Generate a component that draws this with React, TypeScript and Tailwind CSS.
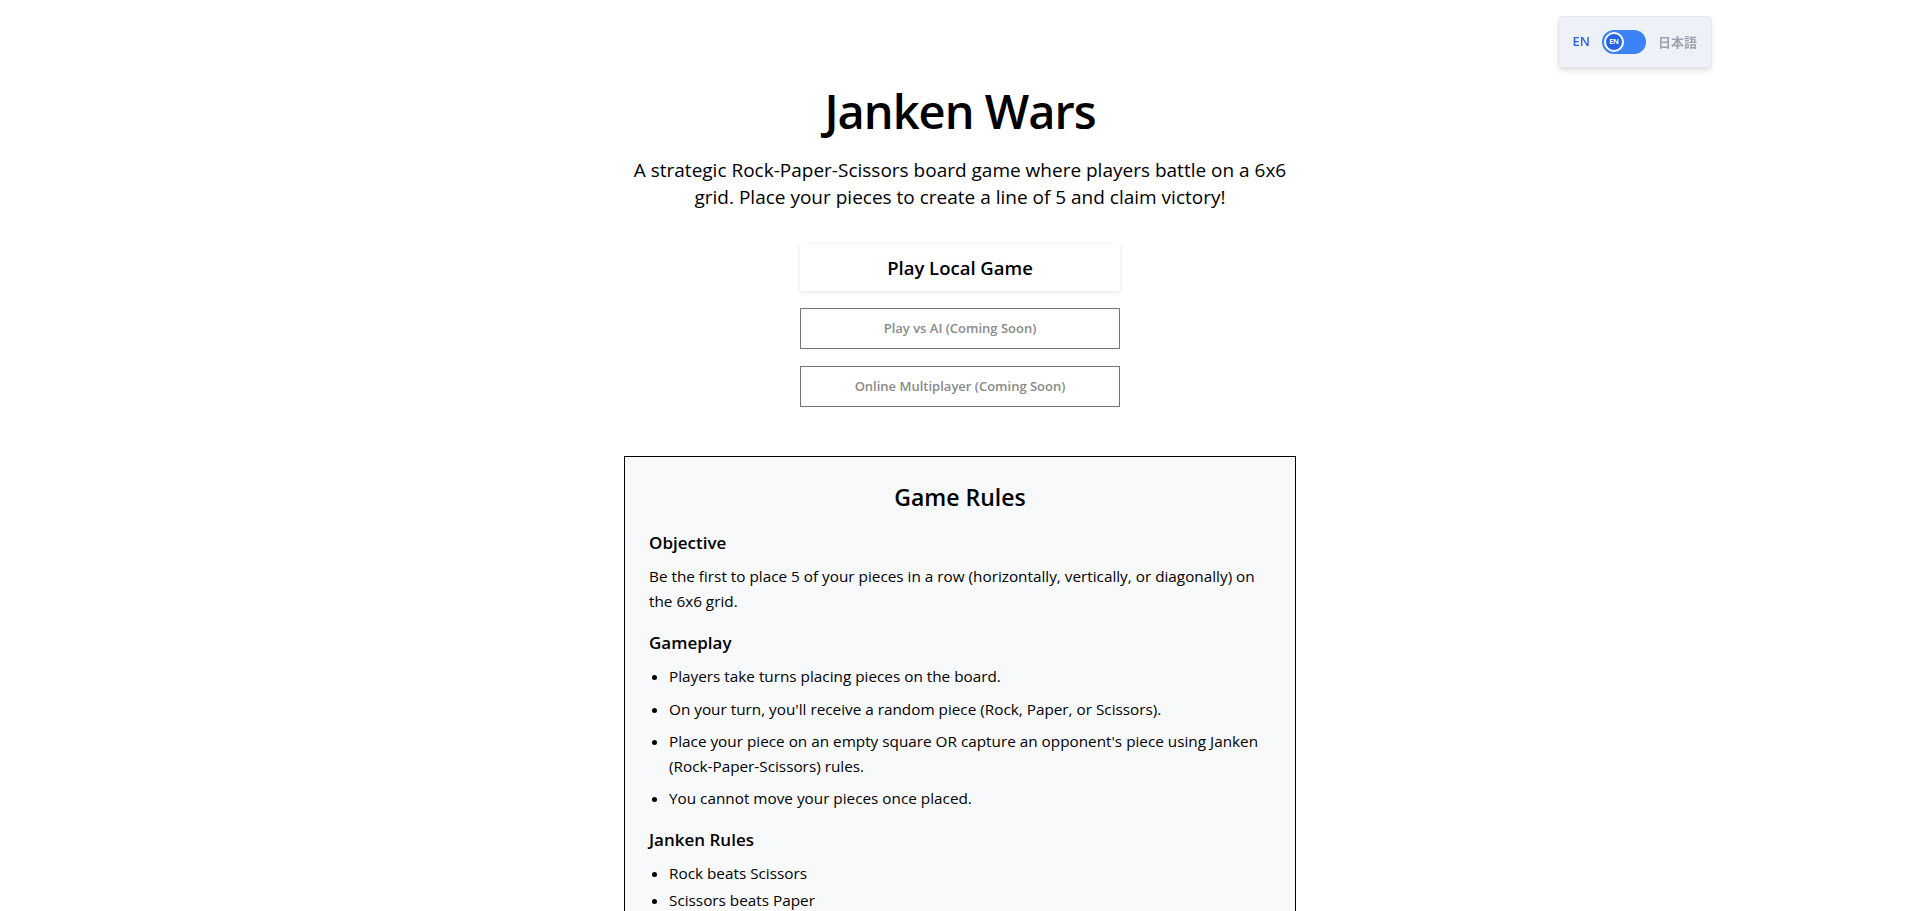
import React from "react";

function LangToggle() {
  return (
    <div className="fixed top-4 right-[208px] flex items-center gap-3 h-[52px] px-3.5 bg-[#eef2f8] border border-[#e3e8f0] rounded-sm shadow-md">
      <span className="text-[13px] font-semibold text-[#2563eb]">EN</span>
      <div className="relative w-11 h-6 rounded-full bg-[#3b82f6] flex items-center px-[2px]">
        <div className="w-5 h-5 rounded-full bg-[#2563eb] border-2 border-white flex items-center justify-center">
          <span className="text-[7.5px] leading-none font-bold text-white tracking-[-0.5px]">EN</span>
        </div>
      </div>
      <span className="text-[13px] font-semibold text-[#9ca3af] font-['Noto_Sans_CJK_JP',sans-serif]">日本語</span>
    </div>
  );
}

export default function App() {
  return (
    <div className="min-h-screen bg-white text-black font-['Open_Sans','Noto_Sans_CJK_JP',sans-serif]">
      <LangToggle />
      <div className="flex flex-col items-center pt-[83px] pb-10">
        <h1 className="text-[47px] leading-[56px] font-semibold tracking-[-1px] mb-[18px]">Janken Wars</h1>
        <p className="max-w-[672px] text-center text-[19px] leading-[27px] mb-[33px]">
          A strategic Rock-Paper-Scissors board game where players battle on a 6x6 grid. Place your pieces to create a line of 5 and claim victory!
        </p>
        <div className="flex flex-col gap-[17px] w-80">
          <button className="h-[47px] bg-white shadow-[0_1px_4px_rgba(0,0,0,0.12)] text-[18.5px] font-semibold text-black">
            Play Local Game
          </button>
          <button disabled className="h-[41px] bg-white border border-[#767676] text-[13px] font-semibold text-[#8a8a8a]">
            Play vs AI (Coming Soon)
          </button>
          <button disabled className="h-[41px] bg-white border border-[#767676] text-[13px] font-semibold text-[#8a8a8a]">
            Online Multiplayer (Coming Soon)
          </button>
        </div>
        <section className="mt-[49px] w-full max-w-[672px] border border-black bg-[#f8f9fa] p-6 text-[15.3px] leading-[24.5px]">
          <h2 className="text-center text-[23px] leading-8 font-semibold mb-[17px]">Game Rules</h2>
          <h3 className="text-[17px] leading-[25px] font-semibold mb-[9px]">Objective</h3>
          <p className="mb-[17px]">
            Be the first to place 5 of your pieces in a row (horizontally, vertically, or diagonally) on the 6x6 grid.
          </p>
          <h3 className="text-[17px] leading-[25px] font-semibold mb-[9px]">Gameplay</h3>
          <ul className="list-disc pl-5 mb-4">
            <li className="mb-2">Players take turns placing pieces on the board.</li>
            <li className="mb-2">On your turn, you'll receive a random piece (Rock, Paper, or Scissors).</li>
            <li className="mb-2">Place your piece on an empty square OR capture an opponent's piece using Janken (Rock-Paper-Scissors) rules.</li>
            <li className="mb-2">You cannot move your pieces once placed.</li>
          </ul>
          <h3 className="text-[17px] leading-[25px] font-semibold mb-[9px]">Janken Rules</h3>
          <ul className="list-disc pl-5 mb-4">
            <li className="mb-[3px]">Rock beats Scissors</li>
            <li className="mb-[3px]">Scissors beats Paper</li>
            <li className="mb-[3px]">Paper beats Rock</li>
          </ul>
        </section>
      </div>
    </div>
  );
}
